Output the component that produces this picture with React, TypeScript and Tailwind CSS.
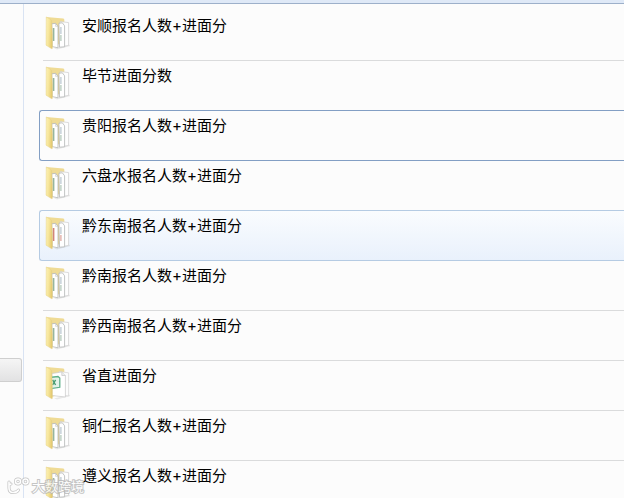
import clsx from "clsx";

type Kind = "green" | "red" | "sheet";

interface Folder {
	name: string;
	kind: Kind;
	state?: "focused" | "hovered";
}

const folders: Folder[] = [
	{ name: "安顺报名人数+进面分", kind: "green" },
	{ name: "毕节进面分数", kind: "green" },
	{ name: "贵阳报名人数+进面分", kind: "green", state: "focused" },
	{ name: "六盘水报名人数+进面分", kind: "green" },
	{ name: "黔东南报名人数+进面分", kind: "red", state: "hovered" },
	{ name: "黔南报名人数+进面分", kind: "green" },
	{ name: "黔西南报名人数+进面分", kind: "green" },
	{ name: "省直进面分", kind: "sheet" },
	{ name: "铜仁报名人数+进面分", kind: "green" },
	{ name: "遵义报名人数+进面分", kind: "green" },
];

function FolderIcon({ kind }: { kind: Kind }) {
	const mark = kind === "red" ? "#cb6f62" : "#84a98f";

	return (
		<svg viewBox="0 0 26 34" className="h-[34px] w-[26px] shrink-0" aria-hidden="true">
			<defs>
				<linearGradient id="flap" x1="0" x2="1" y1="0" y2="0.3">
					<stop offset="0" stopColor="#fcf1b6" />
					<stop offset="0.5" stopColor="#f7e69b" />
					<stop offset="1" stopColor="#e6cc75" />
				</linearGradient>
			</defs>
			<path d="M9 32.5L24 28.5L25.5 30L12 33.5Z" fill="#000" opacity="0.08" />
			<path d="M1.2 0.9L18.3 2.6Q19.3 2.8 19.3 4V26L7 31Z" fill="#efdb95" />
			{kind === "sheet" ? (
				<>
					<path d="M14 5.5L23.6 6.8V30L14 28.5Z" fill="#fcfcfc" stroke="#d4d4d4" strokeWidth="0.7" />
					<path d="M7 7.5L16.8 6L20.4 9.5V31L7 29.5Z" fill="#fff" stroke="#c8c8c8" strokeWidth="0.7" />
					<path d="M16.8 6V9.5H20.4" fill="#eee" stroke="#bdbdbd" strokeWidth="0.6" />
					<path d="M4.5 11.5L13 10.5L14.8 12V21.3L4.5 22.8Z" fill="#e4f3ea" stroke="#5fb089" strokeWidth="1.3" />
					<path d="M7.6 13.8L10.6 19M10.6 13.8L7.6 19" stroke="#4a9c73" strokeWidth="1.4" />
				</>
			) : (
				<>
					<path d="M15 5.5L23.6 6.6V29.4L17 30.5Z" fill="#fefefe" stroke="#cdcdcd" strokeWidth="0.7" />
					<path d="M13.9 7.3L17.3 6.8L19.6 9.8V30.8L14.5 31.2Z" fill="#fff" stroke="#b2b5b5" strokeWidth="0.8" />
					<path d="M15.9 11V18" stroke="#c2ced6" strokeWidth="1.4" />
					<path d="M15.9 19V25" stroke={mark} strokeWidth="1.4" opacity="0.55" />
					<path d="M6.8 7.8L10.6 7.3L13 10.3V31.8L7.2 30.6Z" fill="#fff" stroke="#b2b5b5" strokeWidth="0.8" />
					<path d="M10.6 7.3V10.3H13" fill="none" stroke="#c2c2c2" strokeWidth="0.6" />
					<path d="M8.6 12V25" stroke={mark} strokeWidth="1.6" opacity="0.85" />
				</>
			)}
			<path
				d="M1.2 0.9L5.8 3.6Q6.6 4.2 6.7 5.2L7.4 18.5L7.4 32.2Q7.2 33.3 6.3 32.6L1 29.2Z"
				fill="url(#flap)"
				stroke="#e4cf88"
				strokeWidth="0.4"
			/>
		</svg>
	);
}

function FolderRow({ folder }: { folder: Folder }) {
	return (
		<li
			className={clsx(
				"flex items-start gap-[11px] pt-[5px] text-[15px] leading-5 text-black",
				!folder.state && "ml-1 h-[50px] border-b border-[#dadbdc] pl-[2px]",
				folder.state && "-mt-px h-[51px] rounded-l-[3px] border border-r-0 pl-[5px]",
				folder.state === "focused" && "border-[#839fc4]",
				folder.state === "hovered" &&
					"border-[#b5cbe3] bg-linear-to-b from-[#fafcfe] to-[#e9f1fc]",
			)}
		>
			<FolderIcon kind={folder.kind} />
			<span className="whitespace-nowrap">{folder.name}</span>
		</li>
	);
}

function Watermark() {
	return (
		<div className="pointer-events-none absolute bottom-0 left-[6px] flex items-center gap-[2px] opacity-80">
			<svg viewBox="0 0 24 18" className="h-[18px] w-6" fill="none" aria-hidden="true">
				<g stroke="#b5b5b5" strokeWidth="3" strokeLinecap="round">
					<path d="M3 5V11Q3 15.5 7 15.5Q11 15.5 12.5 13M3 8L5 7" />
					<circle cx="12" cy="4.5" r="2.5" />
					<circle cx="19.5" cy="4.5" r="2.5" />
				</g>
				<g stroke="#fff" strokeWidth="1.6" strokeLinecap="round">
					<path d="M3 5V11Q3 15.5 7 15.5Q11 15.5 12.5 13M3 8L5 7" />
					<circle cx="12" cy="4.5" r="2.5" />
					<circle cx="19.5" cy="4.5" r="2.5" />
				</g>
			</svg>
			<span className="text-[13px] leading-6 whitespace-nowrap text-white [paint-order:stroke] [-webkit-text-stroke:2px_#b8b8b8]">
				大数跨境
			</span>
		</div>
	);
}

export default function App() {
	return (
		<div className="relative flex h-screen flex-col overflow-hidden bg-[#fcfcfc] font-['Inter','Noto_Sans_CJK_SC',sans-serif]">
			<header className="h-1 shrink-0 border-b border-[#9db0ca] bg-[#dfe9f7]" />
			<div className="flex min-h-0 flex-1">
				<aside className="w-6 shrink-0 border-r border-[#d9e3f3] pt-[354px]">
					<button
						type="button"
						aria-label="滚动"
						className="block h-6 w-[22px] rounded-r-[3px] border border-l-0 border-[#cfcfcf] bg-linear-to-b from-[#f5f5f5] to-[#e2e2e3]"
					/>
				</aside>
				<main className="min-w-0 flex-1 pt-[7px] pl-[15px]">
					<ul>
						{folders.map((folder) => (
							<FolderRow key={folder.name} folder={folder} />
						))}
					</ul>
				</main>
			</div>
			<Watermark />
		</div>
	);
}
